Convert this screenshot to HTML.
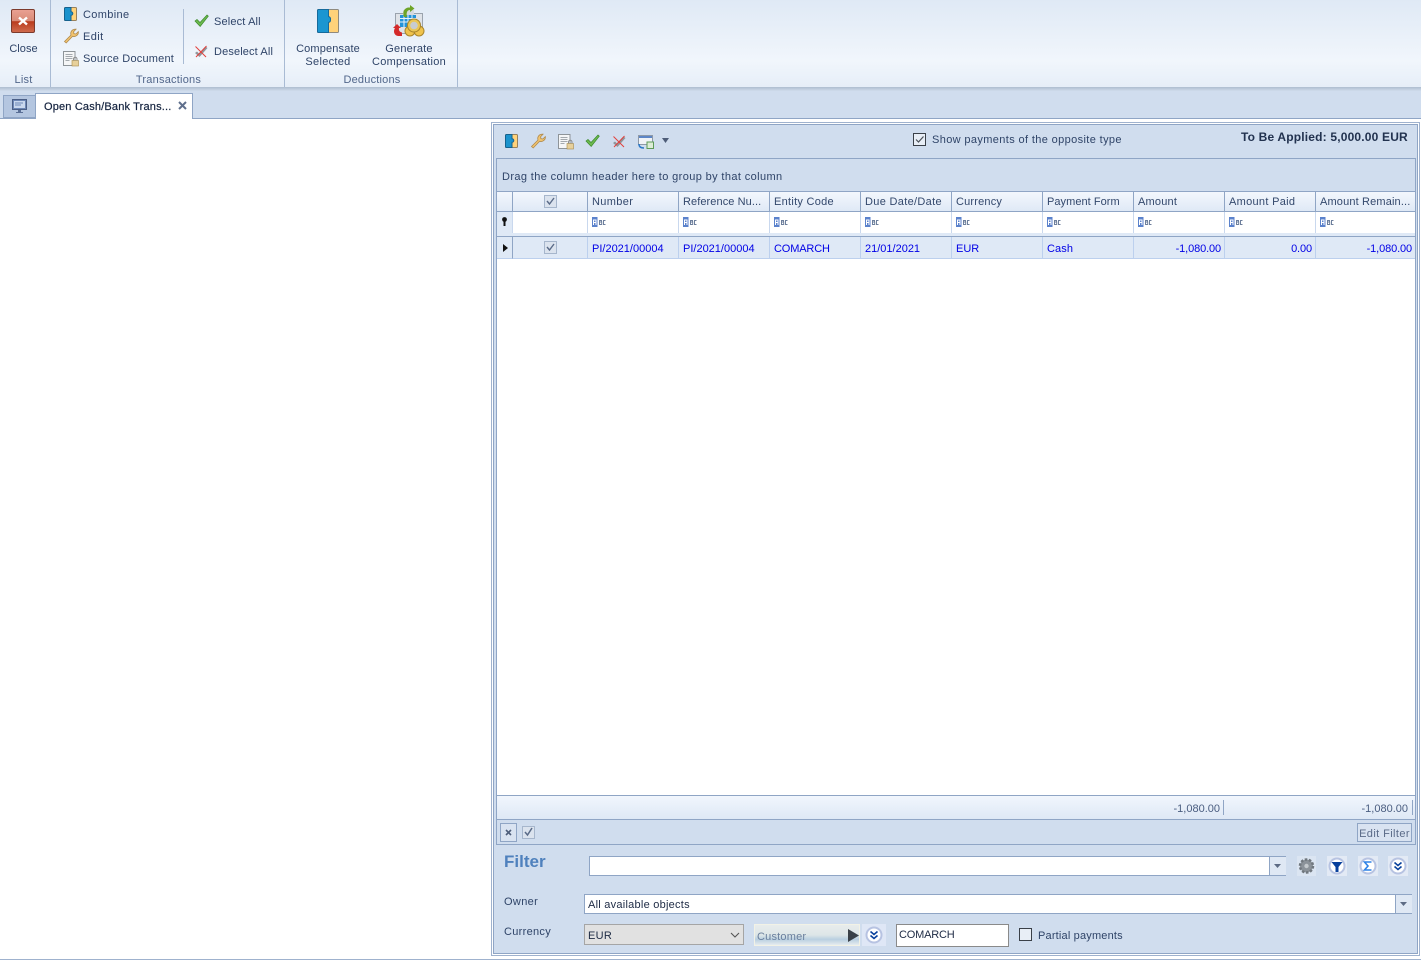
<!DOCTYPE html>
<html><head><meta charset="utf-8"><title>Open Cash/Bank Transactions</title>
<style>
html,body{margin:0;padding:0;background:#fff}
#p{position:relative;width:1421px;height:961px;overflow:hidden;background:#fff;font:11px "Liberation Sans",sans-serif;color:#2f4468}
#p div,#p span,#p svg{position:absolute}
.t{white-space:nowrap;letter-spacing:.2px;line-height:13px;margin-top:1px}
.c{text-align:center}
.g{color:#51668a}
.r{text-align:right}
.h{top:192px;height:19px;background:linear-gradient(#f3f7fd,#dfe9f6);border-right:1px solid #8fa5c5;border-bottom:1px solid #8fa5c5}
.h b{position:absolute;left:4px;top:4px;font-weight:normal;white-space:nowrap;letter-spacing:.2px;line-height:13px;color:#33486c}
.f{top:212px;height:21px;background:#fff;border-right:1px solid #c9d8ee}
.d{top:237px;height:21px;background:#dfe9f6;border-right:1px solid #bcd0ee;border-bottom:1px solid #bcd0ee}
.d i{position:absolute;left:4px;top:6px;font-style:normal;white-space:nowrap;color:#0000e6;letter-spacing:0;line-height:13px}
.d i.r{left:auto;right:3px;letter-spacing:-.12px}
.abc{left:4px;top:5px;width:15px;height:10px}
.sep{width:1px;background:#a9bbd4}
.box{background:#fff;border:1px solid #8fa5c5;box-sizing:border-box}
.cb{width:11px;height:11px;border:1px solid #a6b6cc;background:#dbe3ee}
</style></head><body><div id="p">
<svg width="0" height="0" style="left:0;top:0"><defs>
<g id="combine"><rect x=".5" y=".5" width="12" height="13" rx="1" fill="#ffd27a" stroke="#99815a"/><path d="M.5 1.500a1 1 0 0 1 1-1h5.500v4.200a1.800 1.800 0 0 1 0 3.600v5.200h-5.500a1 1 0 0 1-1-1z" fill="#1b93cd" stroke="#15628f"/></g>
<g id="wrench"><path d="M1.500 13.500 8 7C7 4 9 1 13 1.200L10.600 3.700l.3 2 2 .3L15.300 3.600C15.800 7 12.500 9.300 9.500 8.300L3.200 15z" fill="#f2c46f" stroke="#b08a4c" stroke-width=".8"/></g>
<g id="doc"><rect x=".5" y=".5" width="11.500" height="14" fill="#f5f6f7" stroke="#8e9499"/><path d="M2.500 3.500h7M2.500 5.500h7M2.500 7.500h7M2.500 9.500h4" stroke="#a4a9ae"/><rect x="9" y="9.500" width="6.500" height="5.500" fill="#e7d09b" stroke="#a88a4a" stroke-width=".6"/><path d="M10.500 9.500V8a1.700 1.700 0 0 1 3.500 0v1.500" fill="none" stroke="#8d8d8d"/></g>
<g id="check"><path d="M1 7l2-1.500 3 3L13 1l1.300 1.200L6.200 12.500z" fill="#6cb84e" stroke="#3b8a2b" stroke-width=".7"/></g>
<g id="uncheck"><path d="M1 9l2-1.500 2 2L11.500 2.500 13.500 4 5.500 13z" fill="#90969c"/><path d="M1.500 2.500 12 13M12.500 2 2 13" stroke="#e2403c" stroke-width="1"/></g>
<g id="abc"><rect width="5.500" height="10" fill="#5b82cc"/><path d="M1.500 8V3h2.500v5M1.500 5.500h2.500" stroke="#fff" fill="none"/><path d="M7.500 3.500h2v1.500h-2zM7.500 5h2.200v2.500h-2.200zM13.500 3.500h-2v4h2" stroke="#6d7f9c" fill="none" stroke-width="1"/></g>
</defs></svg>

<!-- ribbon -->
<div style="left:0;top:0;width:1421px;height:87px;background:linear-gradient(#dfe9f5,#f1f6fc 70%,#e6eef8)"></div>
<div style="left:0;top:87px;width:1421px;height:4px;background:linear-gradient(#aebdd0,#cfdcec)"></div>
<div style="left:0;top:91px;width:1421px;height:27px;background:#d0ddee"></div>
<div style="left:0;top:118px;width:1421px;height:1px;background:#8fa5c5"></div>
<div class="sep" style="left:50px;top:0;height:87px"></div>
<div class="sep" style="left:284px;top:0;height:87px"></div>
<div class="sep" style="left:457px;top:0;height:87px"></div>
<div class="sep" style="left:183px;top:9px;height:55px"></div>

<!-- close -->
<div style="left:11px;top:9px;width:24px;height:24px;border-radius:2px;border:1px solid #7c3a2c;box-sizing:border-box;background:linear-gradient(#e9a091 0,#d98b78 50%,#b93a1c 52%,#cf6a4c 100%)"></div>
<svg style="left:11px;top:9px" width="24" height="24"><path d="M8 8.500l8 7M16 8.500l-8 7" stroke="#fff" stroke-width="2.400"/></svg>
<span class="t c" style="left:0;width:47px;top:42px;letter-spacing:.05px">Close</span>
<span class="t c g" style="left:0;width:47px;top:73px">List</span>

<svg style="left:64px;top:7px" width="14" height="14"><use href="#combine"/></svg>
<span class="t" style="left:83px;top:8px;letter-spacing:.35px">Combine</span>
<svg style="left:63px;top:28px" width="16" height="16"><use href="#wrench"/></svg>
<span class="t" style="left:83px;top:30px;letter-spacing:.4px">Edit</span>
<svg style="left:63px;top:51px" width="16" height="16"><use href="#doc"/></svg>
<span class="t" style="left:83px;top:52px">Source Document</span>
<svg style="left:194px;top:14px" width="15" height="14"><use href="#check"/></svg>
<span class="t" style="left:214px;top:15px;letter-spacing:.15px">Select All</span>
<svg style="left:194px;top:44px" width="15" height="14"><use href="#uncheck"/></svg>
<span class="t" style="left:214px;top:45px;letter-spacing:.13px">Deselect All</span>
<span class="t c g" style="left:53px;width:231px;top:73px;letter-spacing:.22px">Transactions</span>

<svg style="left:317px;top:9px" width="22" height="25" viewBox="0 0 22 25"><rect x=".5" y=".5" width="21" height="23" rx="1" fill="#ffd27a" stroke="#8f8a7e"/><path d="M.5 1.500a1 1 0 0 1 1-1h10v7a2.800 2.800 0 0 1 2 3 2.800 2.800 0 0 1-2 3v10h-10a1 1 0 0 1-1-1z" fill="#1b96d1" stroke="#156a9c"/></svg>
<span class="t c" style="left:288px;width:80px;top:42px;letter-spacing:.15px">Compensate</span>
<span class="t c" style="left:288px;width:80px;top:55px;letter-spacing:.3px">Selected</span>

<svg style="left:392px;top:4px" width="34" height="34" viewBox="0 0 34 34"><rect x="3.500" y="9.500" width="27" height="20" fill="#dfe3e8" stroke="#9aa3ad"/><path d="M11 6h11v5H11z" fill="#d5dae0"/><path d="M8 11h16v12H8z" fill="#2393d9"/><path d="M8 14.500h16M8 18h16M12 11v12M16 11v12M20 11v12" stroke="#e8f2fa"/><path d="M12 13C10 7 13 3 18 3.500V1l4.500 3.500L18 8V6c-3 0-4 3-3 7z" fill="#6ea428"/><path d="M5 20 9 24H7c-.5 2 .5 4 3 4.500V32H6C2 31.500 1 27 3 24H1z" fill="#d42a2a"/><circle cx="18" cy="27" r="5" fill="#efc34d" stroke="#a9852b"/><circle cx="27" cy="27" r="5" fill="#efc34d" stroke="#a9852b"/><circle cx="22" cy="21.500" r="6.500" fill="#eac656" stroke="#a9852b"/><circle cx="22" cy="21.500" r="3.800" fill="#c8ccd0"/></svg>
<span class="t c" style="left:369px;width:80px;top:42px;letter-spacing:.2px">Generate</span>
<span class="t c" style="left:364px;width:90px;top:55px;letter-spacing:.25px">Compensation</span>
<span class="t c g" style="left:286px;width:172px;top:73px;letter-spacing:.2px">Deductions</span>

<!-- tabs -->
<div style="left:3px;top:95px;width:33px;height:23px;background:#b4c6e0;border:1px solid #8fa5c5;box-sizing:border-box"></div>
<svg style="left:12px;top:99px" width="16" height="15"><rect x=".5" y=".5" width="14" height="10" fill="#6d87b5" stroke="#4b5f86"/><path d="M2 2h11v7H2z" fill="#c9d8ee"/><path d="M3 4h8M3 6h6" stroke="#6d87b5"/><path d="M6 11h3v2h2v1H4v-1h2z" fill="#5a6f96"/></svg>
<div style="left:35px;top:93px;width:158px;height:26px;background:#fff;border:1px solid #8fa5c5;border-bottom:0;box-sizing:border-box"></div>
<span class="t" style="left:44px;top:100px;color:#14233f;letter-spacing:.17px;-webkit-text-stroke:.2px #14233f">Open Cash/Bank Trans...</span>
<svg style="left:178px;top:101px" width="9" height="9"><path d="M1 1l7 7M8 1L1 8" stroke="#5f6f8c" stroke-width="2"/></svg>

<!-- panel -->
<div style="left:491px;top:122px;width:929px;height:834px;background:#fff;border:1px solid #9fb2ce;box-sizing:border-box"></div>
<div style="left:493px;top:124px;width:925px;height:830px;background:#d0ddee;border:1px solid #8fa5c5;box-sizing:border-box"></div>

<svg style="left:505px;top:134px" width="14" height="14"><use href="#combine"/></svg>
<svg style="left:530px;top:133px" width="16" height="16"><use href="#wrench"/></svg>
<svg style="left:558px;top:134px" width="16" height="16"><use href="#doc"/></svg>
<svg style="left:585px;top:134px" width="15" height="14"><use href="#check"/></svg>
<svg style="left:612px;top:134px" width="15" height="14"><use href="#uncheck"/></svg>
<svg style="left:638px;top:135px" width="16" height="14"><rect x=".5" y=".5" width="14" height="9" fill="#f0f3f7" stroke="#8e99a8"/><rect x="1" y="1" width="13" height="2" fill="#5d86c6"/><rect x="9" y="7" width="6.500" height="6.500" fill="#dcecd6" stroke="#5d9a58"/><path d="M1 9c0 3 2 4 5 4" stroke="#2d79c7" stroke-width="1.500" fill="none"/></svg>
<svg style="left:661px;top:138px" width="9" height="5"><path d="M1 0h7L4.500 5z" fill="#4e5d78"/></svg>

<div style="left:913px;top:133px;width:13px;height:13px;border:1px solid #3a4048;box-sizing:border-box;background:#e8eef6"></div>
<svg style="left:913px;top:133px" width="13" height="13"><path d="M3 6.500l2.500 2.500 5-5.500" stroke="#4a5058" stroke-width="1.200" fill="none"/></svg>
<span class="t" style="left:932px;top:133px;letter-spacing:.37px">Show payments of the opposite type</span>
<span class="t" style="left:1241px;top:130px;font-weight:bold;font-size:12px;letter-spacing:.18px;color:#22324f">To Be Applied: 5,000.00 EUR</span>

<!-- grid -->
<div style="left:496px;top:158px;width:920px;height:662px;background:#fff;border:1px solid #8fa5c5;box-sizing:border-box"></div>
<div style="left:497px;top:159px;width:918px;height:32px;background:#d0ddee;border-bottom:1px solid #8fa5c5"></div>
<span class="t" style="left:502px;top:170px;letter-spacing:.38px">Drag the column header here to group by that column</span>

<div class="h" style="left:497px;width:15px"></div>
<div class="h" style="left:513px;width:74px"></div>
<div class="cb" style="left:544px;top:195px"></div>
<svg style="left:544px;top:195px" width="13" height="13"><path d="M3 6l2.500 3 4.500-6" stroke="#5a6b88" stroke-width="1.400" fill="none"/></svg>
<div class="h" style="left:588px;width:90px"><b style="letter-spacing:.35px">Number</b></div>
<div class="h" style="left:679px;width:90px"><b style="letter-spacing:.08px">Reference Nu...</b></div>
<div class="h" style="left:770px;width:90px"><b style="letter-spacing:.28px">Entity Code</b></div>
<div class="h" style="left:861px;width:90px"><b style="letter-spacing:.32px">Due Date/Date</b></div>
<div class="h" style="left:952px;width:90px"><b style="letter-spacing:.18px">Currency</b></div>
<div class="h" style="left:1043px;width:90px"><b style="letter-spacing:.05px">Payment Form</b></div>
<div class="h" style="left:1134px;width:90px"><b>Amount</b></div>
<div class="h" style="left:1225px;width:90px"><b style="letter-spacing:.3px">Amount Paid</b></div>
<div class="h" style="left:1316px;width:99px;border-right:0"><b style="letter-spacing:.15px">Amount Remain...</b></div>

<div class="f" style="left:497px;width:15px;background:#dfe9f6"></div>
<svg style="left:501px;top:217px" width="7" height="10"><circle cx="3.500" cy="2.500" r="2.400" fill="#111"/><rect x="2.500" y="4" width="2" height="5" fill="#111"/></svg>
<div class="f" style="left:513px;width:74px"></div>
<div class="f" style="left:588px;width:90px"><svg class="abc"><use href="#abc"/></svg></div>
<div class="f" style="left:679px;width:90px"><svg class="abc"><use href="#abc"/></svg></div>
<div class="f" style="left:770px;width:90px"><svg class="abc"><use href="#abc"/></svg></div>
<div class="f" style="left:861px;width:90px"><svg class="abc"><use href="#abc"/></svg></div>
<div class="f" style="left:952px;width:90px"><svg class="abc"><use href="#abc"/></svg></div>
<div class="f" style="left:1043px;width:90px"><svg class="abc"><use href="#abc"/></svg></div>
<div class="f" style="left:1134px;width:90px"><svg class="abc"><use href="#abc"/></svg></div>
<div class="f" style="left:1225px;width:90px"><svg class="abc"><use href="#abc"/></svg></div>
<div class="f" style="left:1316px;width:99px;border-right:0"><svg class="abc"><use href="#abc"/></svg></div>
<div style="left:497px;top:233px;width:918px;height:3px;background:#dfe9f6"></div>
<div style="left:497px;top:236px;width:918px;height:1px;background:#8fa5c5"></div>

<div class="d" style="left:497px;width:15px;background:#dfe9f6;border-right:1px solid #8fa5c5"></div>
<svg style="left:503px;top:244px" width="5" height="8"><path d="M0 0l5 4-5 4z" fill="#111"/></svg>
<div class="d" style="left:513px;width:74px"></div>
<div class="cb" style="left:544px;top:241px"></div>
<svg style="left:544px;top:241px" width="13" height="13"><path d="M3 6l2.500 3 4.500-6" stroke="#5a6b88" stroke-width="1.400" fill="none"/></svg>
<div class="d" style="left:588px;width:90px"><i>PI/2021/00004</i></div>
<div class="d" style="left:679px;width:90px"><i>PI/2021/00004</i></div>
<div class="d" style="left:770px;width:90px"><i style="letter-spacing:-.15px">COMARCH</i></div>
<div class="d" style="left:861px;width:90px"><i>21/01/2021</i></div>
<div class="d" style="left:952px;width:90px"><i>EUR</i></div>
<div class="d" style="left:1043px;width:90px"><i style="letter-spacing:.1px">Cash</i></div>
<div class="d" style="left:1134px;width:90px"><i class="r">-1,080.00</i></div>
<div class="d" style="left:1225px;width:90px"><i class="r">0.00</i></div>
<div class="d" style="left:1316px;width:99px;border-right:0"><i class="r">-1,080.00</i></div>

<!-- footer -->
<div style="left:497px;top:795px;width:918px;height:24px;background:linear-gradient(#f1f6fd,#dee8f5);border-top:1px solid #8fa5c5;box-sizing:border-box"></div>
<span class="t r" style="left:1120px;width:100px;top:802px;letter-spacing:0;color:#4a5d80">-1,080.00</span>
<span class="t r" style="left:1308px;width:100px;top:802px;letter-spacing:0;color:#4a5d80">-1,080.00</span>
<div class="sep" style="left:1223px;top:800px;height:15px;background:#8fa5c5"></div>
<div class="sep" style="left:1412px;top:800px;height:15px;background:#8fa5c5"></div>

<div style="left:496px;top:819px;width:920px;height:26px;background:#d0ddee;border:1px solid #8fa5c5;box-sizing:border-box"></div>
<div style="left:500px;top:823px;width:17px;height:19px;background:#d9e3f1;border:1px solid #8fa5c5;box-sizing:border-box"></div>
<svg style="left:505px;top:829px" width="8" height="7"><path d="M1 1l5 5M6 1L1 6" stroke="#4d5d7a" stroke-width="1.600"/></svg>
<div class="cb" style="left:522px;top:826px"></div>
<svg style="left:522px;top:826px" width="13" height="13"><path d="M3 6l2.500 3 4.500-7" stroke="#5a6b88" stroke-width="1.500" fill="none"/></svg>
<div style="left:1357px;top:823px;width:55px;height:19px;background:#d9e3f1;border:1px solid #8fa5c5;box-sizing:border-box"></div>
<span class="t c" style="left:1357px;width:55px;top:827px;color:#5b6b88;letter-spacing:.4px">Edit Filter</span>

<!-- filter -->
<span class="t" style="left:504px;top:853px;margin-top:0;font-weight:bold;font-size:17px;line-height:17px;letter-spacing:0;color:#4f81bd">Filter</span>
<div class="box" style="left:589px;top:856px;width:697px;height:20px"></div>
<div style="left:1269px;top:857px;width:16px;height:18px;background:#dfe8f4;border-left:1px solid #8fa5c5"></div>
<svg style="left:1274px;top:864px" width="7" height="4"><path d="M0 0h7L3.500 4z" fill="#5d6b84"/></svg>

<div style="left:1297px;top:856px;width:19px;height:20px;background:#dbe5f2"></div>
<svg style="left:1297px;top:857px" width="19" height="18" viewBox="0 0 19 18"><circle cx="9.500" cy="9" r="6.500" fill="#8b9299" stroke="#70777e" stroke-width="2.500" stroke-dasharray="2.500 1.600"/><circle cx="9.500" cy="9" r="2.200" fill="#c3c8cc"/></svg>
<div style="left:1327px;top:856px;width:20px;height:20px;background:#e3eaf5"></div>
<svg style="left:1328px;top:857px" width="18" height="18"><circle cx="9" cy="9" r="7.500" fill="#fff" stroke="#b7c3e2" stroke-width="2"/><path d="M3.500 5h11L10.500 10v5h-3v-5z" fill="#08409c"/></svg>
<div style="left:1358px;top:856px;width:20px;height:20px;background:#e3eaf5"></div>
<svg style="left:1359px;top:857px" width="18" height="18"><circle cx="9" cy="9" r="7.500" fill="#fff" stroke="#b7c3e2" stroke-width="2"/><path d="M12.500 5h-7L9 9l-3.500 4h7" fill="none" stroke="#2f82e6" stroke-width="1.600"/></svg>
<div style="left:1388px;top:856px;width:20px;height:20px;background:#e3eaf5"></div>
<svg style="left:1389px;top:857px" width="18" height="18"><circle cx="9" cy="9" r="7.500" fill="#fff" stroke="#b7c3e2" stroke-width="2"/><path d="M5.500 5.500 9 8.500l3.500-3M5.500 9.500 9 12.500l3.500-3" fill="none" stroke="#08409c" stroke-width="1.600"/></svg>

<span class="t" style="left:504px;top:895px;letter-spacing:.35px">Owner</span>
<div class="box" style="left:584px;top:894px;width:828px;height:20px"></div>
<span class="t" style="left:588px;top:898px;color:#1d2a44;letter-spacing:.25px">All available objects</span>
<div style="left:1395px;top:895px;width:16px;height:18px;background:#dfe8f4;border-left:1px solid #8fa5c5"></div>
<svg style="left:1400px;top:902px" width="7" height="4"><path d="M0 0h7L3.500 4z" fill="#5d6b84"/></svg>

<span class="t" style="left:504px;top:925px;letter-spacing:.3px">Currency</span>
<div style="left:584px;top:924px;width:160px;height:21px;background:#e1e1e1;border:1px solid #a5a5a5;box-sizing:border-box"></div>
<span class="t" style="left:588px;top:929px;color:#1d2a44;letter-spacing:.3px">EUR</span>
<svg style="left:730px;top:932px" width="10" height="6"><path d="M1 1l4 4 4-4" fill="none" stroke="#555" stroke-width="1.100"/></svg>

<div style="left:754px;top:924px;width:106px;height:22px;box-sizing:border-box;border:1px solid #f2f2e6;background:linear-gradient(#e8ecec,#dde6e8 50%,#b9cfe0 72%,#e6ecef)"></div>
<span class="t" style="left:757px;top:930px;color:#6a7f9d">Customer</span>
<svg style="left:848px;top:929px" width="11" height="13"><path d="M0 0l11 6.500L0 13z" fill="#3a4148"/></svg>
<div style="left:862px;top:924px;width:24px;height:22px;background:#dfe7f6"></div>
<svg style="left:865px;top:926px" width="18" height="18"><circle cx="9" cy="9" r="7.500" fill="#fff" stroke="#b7c3e2" stroke-width="2"/><path d="M5.500 5.500 9 8.500l3.500-3M5.500 9.500 9 12.500l3.500-3" fill="none" stroke="#08409c" stroke-width="1.600"/></svg>

<div style="left:896px;top:924px;width:113px;height:23px;background:#fff;border:1px solid #8a8a8a;box-sizing:border-box"></div>
<span class="t" style="left:899px;top:928px;color:#1d2a44;letter-spacing:-.2px">COMARCH</span>
<div style="left:1019px;top:928px;width:13px;height:13px;background:#e8eef6;border:1px solid #3a4048;box-sizing:border-box"></div>
<span class="t" style="left:1038px;top:929px;letter-spacing:.18px">Partial payments</span>

<div style="left:0;top:959px;width:1421px;height:1px;background:#9fb2ce"></div>
</div></body></html>
